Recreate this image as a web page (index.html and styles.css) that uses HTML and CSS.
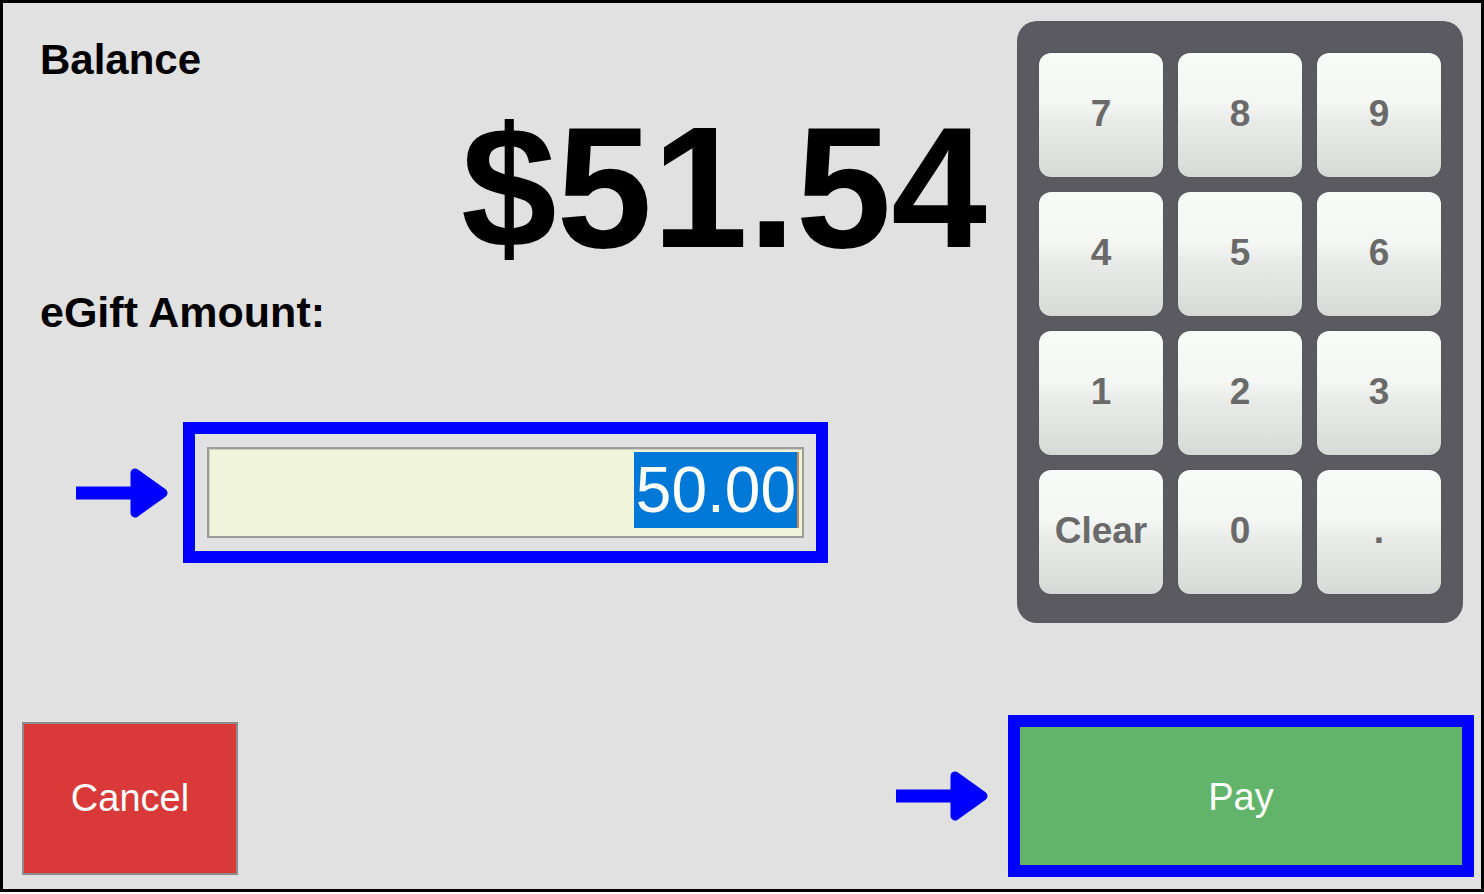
FILE: index.html
```html
<!DOCTYPE html>
<html>
<head>
<meta charset="utf-8">
<link rel="stylesheet" href="styles.css">
</head>
<body>
<div class="frame">
  <div class="main">
    <div class="left">
      <div class="label balance">Balance</div>
      <div class="amount">$51.54</div>
      <div class="label egift">eGift Amount:</div>
      <div class="field-row">
        <svg class="arrow" width="94" height="50" viewBox="0 0 94 50"><rect x="1" y="18.5" width="58" height="13" fill="#0000ff"/><polygon points="60,5 88,25 60,45" fill="#0000ff" stroke="#0000ff" stroke-width="9" stroke-linejoin="round"/></svg>
        <div class="hl field-hl">
          <div class="field"><span class="sel">50.00</span><span class="caret"></span></div>
        </div>
      </div>
    </div>
    <div class="keypad">
      <div class="key">7</div>
      <div class="key">8</div>
      <div class="key">9</div>
      <div class="key">4</div>
      <div class="key">5</div>
      <div class="key">6</div>
      <div class="key">1</div>
      <div class="key">2</div>
      <div class="key">3</div>
      <div class="key">Clear</div>
      <div class="key">0</div>
      <div class="key">.</div>
    </div>
  </div>
  <div class="footer">
    <div class="btn cancel">Cancel</div>
    <div class="pay-group">
      <svg class="arrow" width="94" height="50" viewBox="0 0 94 50"><rect x="1" y="18.5" width="58" height="13" fill="#0000ff"/><polygon points="60,5 88,25 60,45" fill="#0000ff" stroke="#0000ff" stroke-width="9" stroke-linejoin="round"/></svg>
      <div class="hl pay-hl">
        <div class="btn pay">Pay</div>
      </div>
    </div>
  </div>
</div>
</body>
</html>
```
FILE: styles.css
```css
* { box-sizing: border-box; }
html, body { margin: 0; padding: 0; background: #ffffff; }
body { font-family: "Liberation Sans", Arial, sans-serif; }

.frame {
  width: 1484px;
  height: 892px;
  border: 3px solid #000;
  background: #e1e1e1;
  display: flex;
  flex-direction: column;
}

.main {
  display: flex;
  flex-direction: row;
  align-items: flex-start;
}

.left {
  flex: 1;
  padding-left: 37px;
  padding-right: 30px;
  display: flex;
  flex-direction: column;
}

.label {
  font-size: 42px;
  line-height: 43px;
  font-weight: bold;
  color: #000;
}
.balance { margin-top: 35px; }
.egift { margin-top: 16px; font-size: 43px; }

.amount {
  margin-top: 19px;
  font-size: 172px;
  line-height: 175px;
  font-weight: bold;
  color: #000;
  text-align: right;
}

.field-row {
  margin-top: 88px;
  display: flex;
  flex-direction: row;
  align-items: center;
  padding-left: 35px;
  gap: 14px;
}

.arrow { display: block; flex: none; }

.hl {
  border: 12px solid #0000ff;
}
.field-hl {
  width: 645px;
  height: 141px;
  padding: 13px 12px 13px 12px;
}

.field {
  height: 91px;
  border: 2px solid #9c9c98;
  background: #f0f4da;
  display: flex;
  justify-content: flex-end;
  align-items: flex-start;
  padding: 3px 3px 0 0;
  box-shadow: inset 1px 1px 1px rgba(0,0,0,0.15);
}

.sel {
  background: #0078d7;
  color: #fff;
  font-size: 64px;
  line-height: 76px;
  height: 76px;
  padding: 0 1px 0 2px;
}
.caret {
  width: 2px;
  height: 76px;
  background: #c98652;
}

.keypad {
  flex: none;
  width: 446px;
  height: 602px;
  margin-top: 18px;
  margin-right: 18px;
  background: #5a5a60;
  border-radius: 20px;
  padding: 32px 21px 29px 22px;
  display: grid;
  grid-template-columns: repeat(3, 124px);
  grid-template-rows: repeat(4, 124px);
  column-gap: 15px;
  row-gap: 15px;
}

.key {
  border-radius: 12px;
  background: linear-gradient(to bottom, #f8fbf8 0%, #f4f7f4 40%, #e9ebe8 56%, #e0e2df 80%, #d7d9d6 100%);
  box-shadow: 0 0 1px rgba(0,0,0,0.35);
  color: #6a6a6a;
  font-size: 37px;
  font-weight: bold;
  display: flex;
  align-items: center;
  justify-content: center;
  padding-bottom: 2px;
}

.footer {
  margin-top: 92px;
  display: flex;
  flex-direction: row;
  align-items: flex-start;
  justify-content: space-between;
  padding-left: 19px;
  padding-right: 7px;
}

.btn {
  color: #fff;
  font-size: 38px;
  display: flex;
  align-items: center;
  justify-content: center;
}

.cancel {
  margin-top: 7px;
  width: 216px;
  height: 153px;
  background: #d93939;
  border: 2px solid #8c8c8c;
}

.pay-group {
  display: flex;
  flex-direction: row;
  align-items: center;
  gap: 19px;
}

.pay-hl {
  width: 466px;
  height: 162px;
}
.pay {
  width: 100%;
  height: 100%;
  background: #62b46a;
  padding-top: 2px;
}
```
